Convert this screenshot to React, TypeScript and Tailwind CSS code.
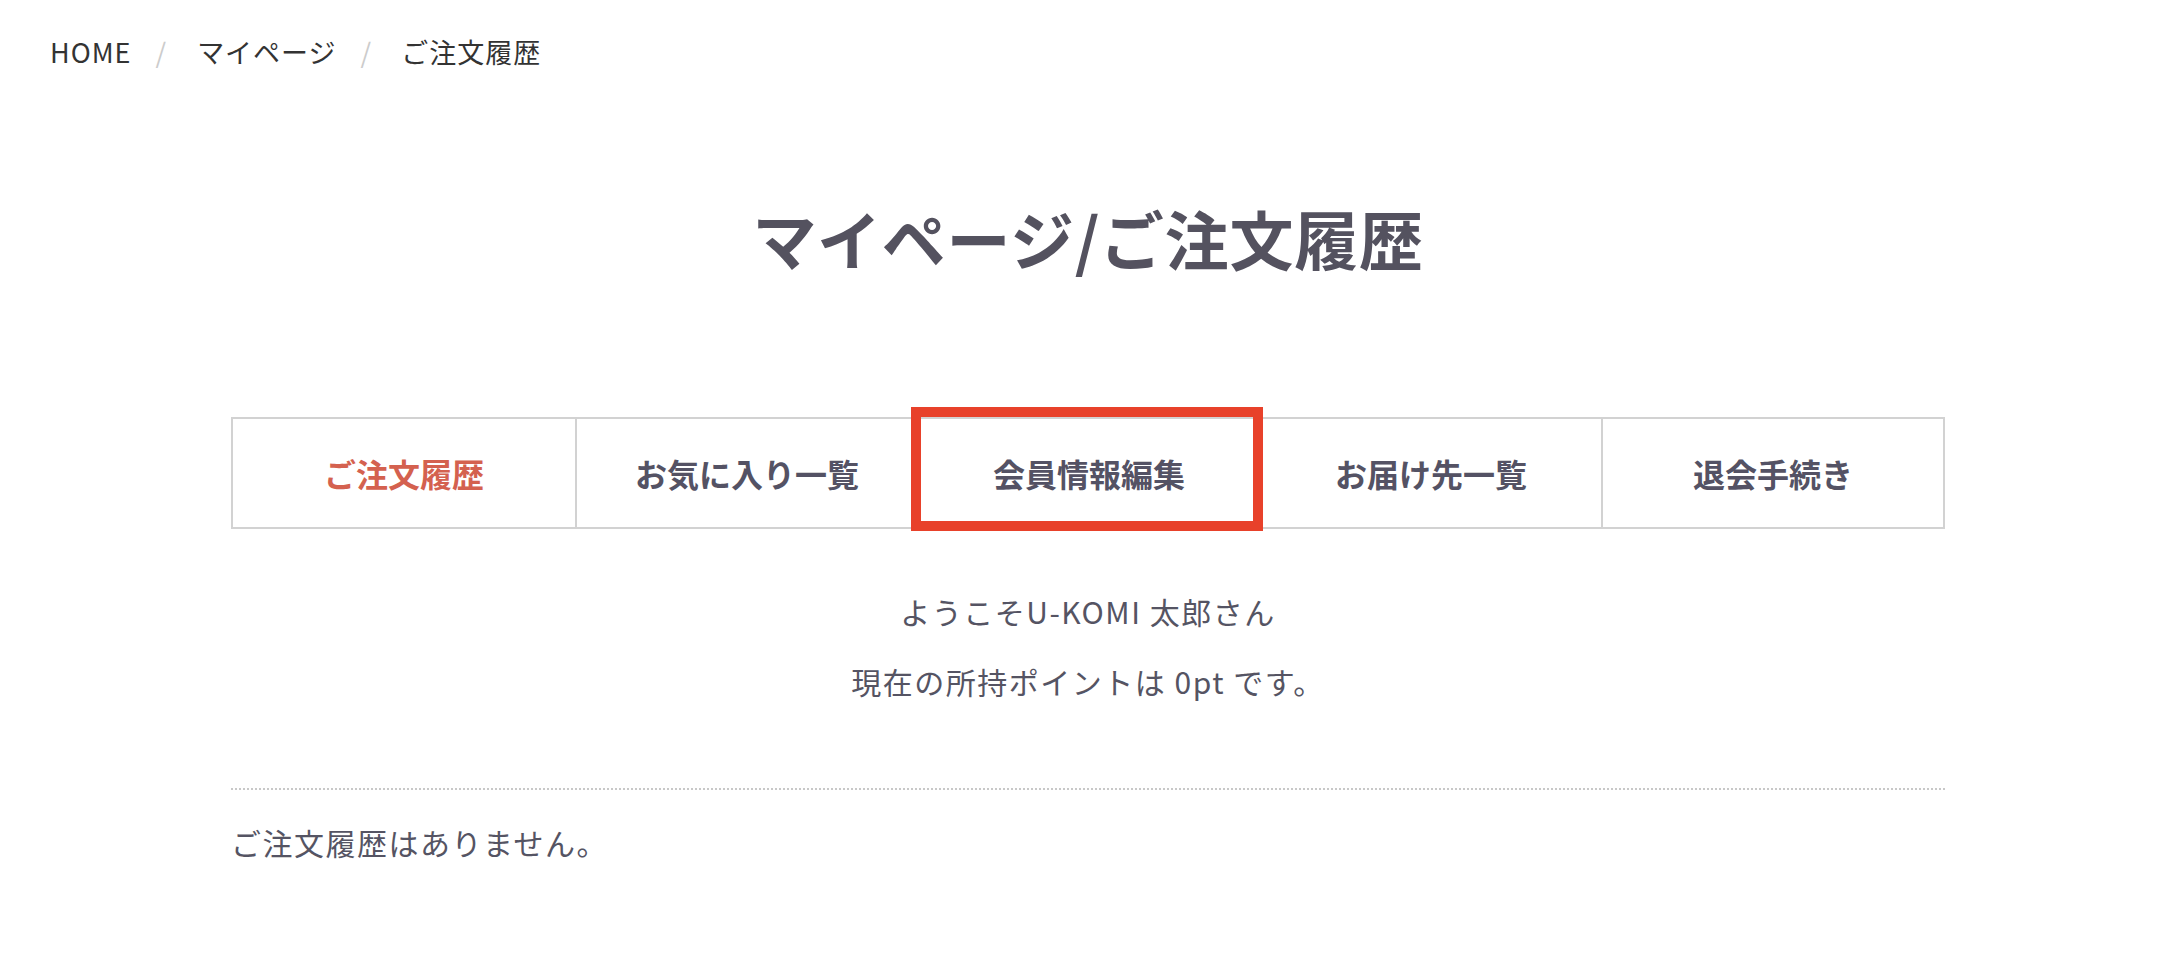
import React from "react";

const tabs = ["ご注文履歴", "お気に入り一覧", "会員情報編集", "お届け先一覧", "退会手続き"];

export default function App() {
  return (
    <div className="min-h-[977px] w-full bg-white font-['Noto_Sans_CJK_JP','Noto_Sans',sans-serif]">
      {/* breadcrumb */}
      <nav className="flex items-center pl-[50px] pt-[32px] text-[27px] leading-[40px] tracking-[1px] text-[#333333]">
        <span>HOME</span>
        <span className="ml-[24px] mr-[30px] text-[#cccccc]">/</span>
        <span>マイページ</span>
        <span className="ml-[24px] mr-[29px] text-[#cccccc]">/</span>
        <span>ご注文履歴</span>
      </nav>

      <div className="ml-[231px] w-[1714px]">
        <h1 className="mt-[125px] text-center text-[64px] font-bold leading-[80px] tracking-[0.7px] text-[#54525f]">
          マイページ/ご注文履歴
        </h1>

        {/* tabs */}
        <div className="relative mt-[140px]">
          <div className="grid h-[112px] grid-cols-5 border-2 border-[#d2d2d2]">
            {tabs.map((t, i) => (
              <div
                key={t}
                className={`flex items-center justify-center text-[32px] font-bold ${
                  i > 0 ? "border-l-2 border-[#d2d2d2]" : ""
                } ${i === 0 ? "text-[#d4614f]" : "text-[#545264]"}`}
              >
                {t}
              </div>
            ))}
          </div>
          <div className="pointer-events-none absolute left-[680px] top-[-10px] h-[124px] w-[352px] border-[10px] border-[#e8412a]" />
        </div>

        <div className="mt-[47px] text-center text-[30px] leading-[70px] tracking-[1.5px] text-[#555463]">
          <p>ようこそU-KOMI 太郎さん</p>
          <p>現在の所持ポイントは 0pt です。</p>
        </div>

        <div className="mt-[72px] border-t-2 border-dotted border-[#c8c8c8]" />

        <p className="mt-[28px] text-[30px] leading-[48px] tracking-[1.5px] text-[#555463]">ご注文履歴はありません。</p>
      </div>
    </div>
  );
}
